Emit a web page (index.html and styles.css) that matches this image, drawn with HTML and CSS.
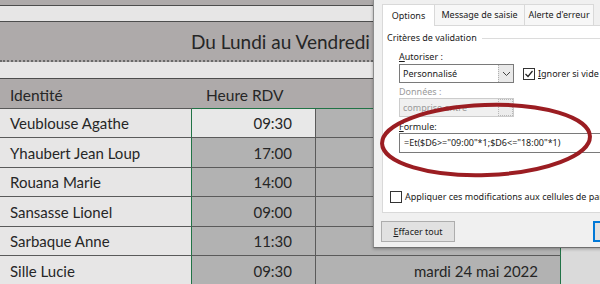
FILE: index.html
```html
<!DOCTYPE html>
<html lang="fr">
<head>
<meta charset="utf-8">
<title>Validation des heures</title>
<link rel="stylesheet" href="styles.css">
</head>
<body>
<div class="sheet">
  <div class="row r-top"></div>
  <div class="row r-gap"></div>
  <div class="row r-title"><span class="title">Du Lundi au Vendredi de 9h à 18h</span></div>
  <div class="row r-gap2"></div>
  <div class="row r-head">
    <div class="cell c-name">Identité</div>
    <div class="cell c-time">Heure RDV</div>
    <div class="cell c-date"></div>
    <div class="cell c-rest"></div>
  </div>
  <div class="row r-data r-odd">
    <div class="cell c-name">Veublouse Agathe</div>
    <div class="cell c-time active">09:30</div>
    <div class="cell c-date"></div>
    <div class="cell c-rest"></div>
  </div>
  <div class="row r-data">
    <div class="cell c-name">Yhaubert Jean Loup</div>
    <div class="cell c-time">17:00</div>
    <div class="cell c-date"></div>
    <div class="cell c-rest"></div>
  </div>
  <div class="row r-data r-odd">
    <div class="cell c-name">Rouana Marie</div>
    <div class="cell c-time">14:00</div>
    <div class="cell c-date"></div>
    <div class="cell c-rest"></div>
  </div>
  <div class="row r-data">
    <div class="cell c-name">Sansasse Lionel</div>
    <div class="cell c-time">09:00</div>
    <div class="cell c-date"></div>
    <div class="cell c-rest"></div>
  </div>
  <div class="row r-data r-odd">
    <div class="cell c-name">Sarbaque Anne</div>
    <div class="cell c-time">11:30</div>
    <div class="cell c-date"></div>
    <div class="cell c-rest"></div>
  </div>
  <div class="row r-data">
    <div class="cell c-name">Sille Lucie</div>
    <div class="cell c-time">09:30</div>
    <div class="cell c-date">mardi 24 mai 2022</div>
    <div class="cell c-rest"></div>
  </div>
</div>

<div class="dlg">
  <div class="tabs">
    <div class="tab on">Options</div>
    <div class="tab t-msg">Message de saisie</div>
    <div class="tab t-err">Alerte d'erreur</div>
  </div>
  <div class="panel">
    <div class="group-title"><span>Critères de validation</span><i class="rule"></i></div>
    <div class="fields">
      <div class="lbl"><u>A</u>utoriser :</div>
      <div class="line">
        <div class="select">Personnalisé<span class="drop"><svg width="9" height="6" viewBox="0 0 9 6"><path d="M1 1 L4.5 4.5 L8 1" fill="none" stroke="#444" stroke-width="1"/></svg></span></div>
        <div class="chk"><span class="box"><svg width="10" height="10" viewBox="0 0 10 10"><path d="M1.5 5 L4 7.5 L8.5 2" fill="none" stroke="#222" stroke-width="1.2"/></svg></span><u>I</u>gnorer si vide</div>
      </div>
      <div class="lbl dis">Données :</div>
      <div class="select dis">comprise entre<span class="drop"></span></div>
      <div class="lbl l-formula"><u>F</u>ormule:</div>
      <div class="input">=Et($D6&gt;="09:00"*1;$D6&lt;="18:00"*1)</div>
    </div>
    <div class="apply"><span class="box"></span>Appliquer ces modifications aux cellules de paramètres identiques</div>
  </div>
  <div class="btns">
    <div class="btn"><u>E</u>ffacer tout</div>
    <div class="btn ok">OK</div>
  </div>
</div>

<svg class="mark" width="600" height="284" viewBox="0 0 600 284">
  <ellipse cx="486" cy="140" rx="104" ry="35" transform="rotate(-2 486 140)" fill="none" stroke="#9b1d22" stroke-width="4"/>
</svg>
</body>
</html>
```

FILE: styles.css
```css
body {
	margin: 0;
	width: 600px;
	height: 284px;
	overflow: hidden;
	position: relative;
	background-color: #dadada;
	font-family: "Lato", "Liberation Sans", sans-serif;
	color: #262626;
	}
.sheet {
	display: flex;
	flex-direction: column;
	}
.row {
	display: flex;
	box-sizing: border-box;
	}
.r-top {
	height: 6px;
	background-color: #aeaaaa;
	border-bottom: 1px solid #4d4d4d;
	}
.r-gap {
	height: 16px;
	background-color: #e7e6e6;
	border-bottom: 1px solid #4d4d4d;
	}
.r-title {
	height: 40px;
	background-color: #aeaaaa;
	border-bottom: 2px dotted #6a6a6a;
	align-items: center;
	padding-left: 191px;
	}
.title {
	font-size: 19px;
	white-space: nowrap;
	}
.r-gap2 {
	height: 17px;
	background-color: #e7e6e6;
	border-bottom: 1px solid #4d4d4d;
	}
.r-head {
	height: 30px;
	background-color: #aeaaaa;
	}
.cell {
	box-sizing: border-box;
	display: flex;
	align-items: flex-end;
	padding-bottom: 5px;
	font-size: 15px;
	white-space: nowrap;
	}
.c-name {
	width: 192px;
	padding-left: 10px;
	}
.c-time {
	width: 124px;
	}
.c-date {
	width: 245px;
	}
.c-rest {
	flex: 1;
	}
.r-head .cell {
	border-bottom: 1px solid #217346;
	padding-bottom: 4px;
	font-size: 15.5px;
	}
.r-head .c-name {
	border-bottom-color: #595959;
	}
.r-head .c-time {
	padding-left: 14px;
	}
.r-head .c-rest {
	border-bottom-color: transparent;
	}
.r-data {
	height: 30px;
	}
.r-odd {
	height: 29px;
	}
.r-data .cell {
	border-bottom: 1px solid #5a5a5a;
	}
.r-data .c-name {
	background-color: #e7e6e6;
	border-right: 1px solid #217346;
	}
.r-data .c-time {
	background-color: #b2b2b2;
	border-right: 1px solid #5a5a5a;
	justify-content: flex-end;
	padding-right: 23px;
	}
.r-data .c-time.active {
	background-color: #e8e8e8;
	}
.r-data .c-date {
	background-color: #b2b2b2;
	border-right: 1px solid #217346;
	justify-content: flex-end;
	padding-right: 22px;
	}
.r-data .c-rest {
	border-bottom-color: transparent;
	}

/* dialog box */
.dlg {
	position: absolute;
	left: 373px;
	top: 0;
	width: 250px;
	height: 248px;
	box-sizing: border-box;
	background-color: #f0f0f0;
	border-left: 1px solid #8c8c8c;
	border-bottom: 1px solid #6e6e6e;
	box-shadow: 0 1px 3px rgba(0,0,0,0.3);
	font-family: "Noto Sans", "Open Sans", sans-serif;
	font-size: 9px;
	line-height: 12px;
	color: #1a1a1a;
	}
.tabs {
	display: flex;
	margin: 4px 0 0 8px;
	height: 21px;
	}
.tab {
	box-sizing: border-box;
	height: 21px;
	border: 1px solid #d9d9d9;
	border-bottom: none;
	margin-left: -1px;
	background-color: #f7f7f7;
	display: flex;
	align-items: center;
	justify-content: center;
	white-space: nowrap;
	}
.tab.on {
	width: 53px;
	height: 22px;
	margin-left: 0;
	background-color: #fff;
	position: relative;
	z-index: 1;
	}
.t-msg {
	width: 91px;
	}
.t-err {
	width: 70px;
	}
.panel {
	margin-left: 8px;
	height: 188px;
	box-sizing: border-box;
	background-color: #fff;
	border: 1px solid #d9d9d9;
	border-right: none;
	}
.group-title {
	height: 24px;
	display: flex;
	align-items: center;
	padding-left: 4px;
	}
.group-title span {
	white-space: nowrap;
	}
.rule {
	flex: 1;
	height: 1px;
	margin-left: 5px;
	background-color: #dcdcdc;
	}
.fields {
	padding-left: 16px;
	display: flex;
	flex-direction: column;
	}
.lbl {
	height: 13px;
	line-height: 13px;
	}
.lbl.dis {
	color: #9a9a9a;
	margin-top: 2px;
	}
.l-formula {
	margin-top: 3px;
	}
.line {
	display: flex;
	align-items: center;
	margin-top: 1px;
	}
.select {
	box-sizing: border-box;
	width: 115px;
	height: 19px;
	border: 1px solid #7a7a7a;
	background-color: #fff;
	display: flex;
	align-items: center;
	padding-left: 3px;
	justify-content: space-between;
	}
.select.dis {
	border-color: #cccccc;
	background-color: #f0f0f0;
	color: #9a9a9a;
	}
.drop {
	width: 15px;
	height: 17px;
	box-sizing: border-box;
	border-left: 1px dotted #b0b0b0;
	background-color: #e9e9e9;
	display: flex;
	align-items: center;
	justify-content: center;
	}
.select.dis .drop {
	border: 1px dotted #b8b8b8;
	background-color: #ececec;
	}
.chk {
	display: flex;
	align-items: center;
	margin-left: 9px;
	white-space: nowrap;
	}
.box {
	flex-shrink: 0;
	width: 12px;
	height: 12px;
	box-sizing: border-box;
	border: 1px solid #333;
	background-color: #fff;
	margin-right: 3px;
	display: flex;
	align-items: center;
	justify-content: center;
	}
.input {
	box-sizing: border-box;
	height: 20px;
	margin-top: 0;
	border: 1px solid #7a7a7a;
	border-right: none;
	display: flex;
	align-items: center;
	padding-left: 4px;
	white-space: nowrap;
	}
.apply {
	display: flex;
	align-items: center;
	margin: 38px 0 0 7px;
	white-space: nowrap;
	}
.btns {
	display: flex;
	justify-content: space-between;
	margin: 8px 0 0 7px;
	}
.btn {
	box-sizing: border-box;
	width: 74px;
	height: 21px;
	border: 1px solid #adadad;
	background-color: #e1e1e1;
	display: flex;
	align-items: center;
	justify-content: center;
	}
.btn.ok {
	width: 30px;
	border: 2px solid #0078d7;
	}
.mark {
	position: absolute;
	left: 0;
	top: 0;
	}
```
